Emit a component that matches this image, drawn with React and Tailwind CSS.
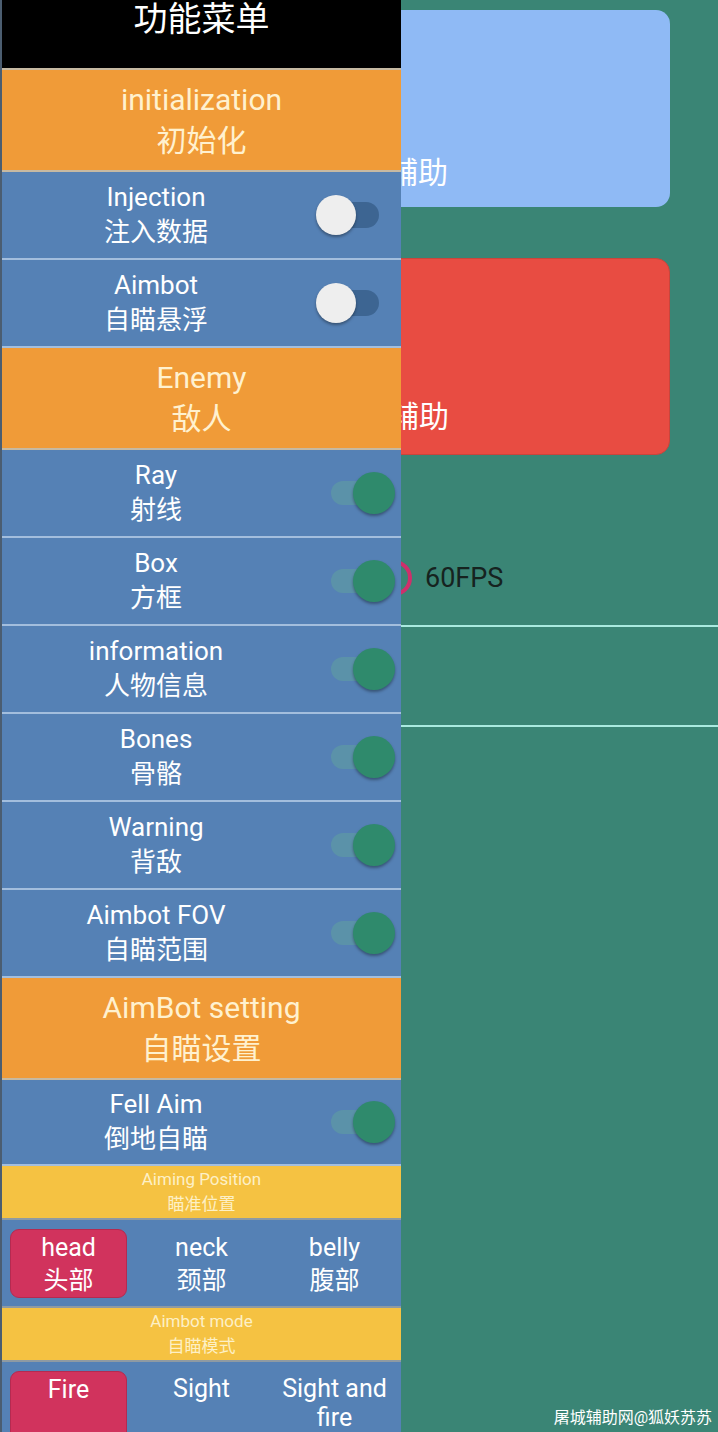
import React from "react";

const menu = [
  { kind: "group", en: "initialization", zh: "初始化" },
  { kind: "switch", en: "Injection", zh: "注入数据", on: false },
  { kind: "switch", en: "Aimbot", zh: "自瞄悬浮", on: false },
  { kind: "group", en: "Enemy", zh: "敌人" },
  { kind: "switch", en: "Ray", zh: "射线", on: true },
  { kind: "switch", en: "Box", zh: "方框", on: true },
  { kind: "switch", en: "information", zh: "人物信息", on: true },
  { kind: "switch", en: "Bones", zh: "骨骼", on: true },
  { kind: "switch", en: "Warning", zh: "背敌", on: true },
  { kind: "switch", en: "Aimbot FOV", zh: "自瞄范围", on: true },
  { kind: "group", en: "AimBot setting", zh: "自瞄设置" },
  { kind: "switch", en: "Fell Aim", zh: "倒地自瞄", on: true, short: true },
  { kind: "label", en: "Aiming Position", zh: "瞄准位置" },
  {
    kind: "choice",
    items: [
      { en: "head", zh: "头部", active: true },
      { en: "neck", zh: "颈部" },
      { en: "belly", zh: "腹部" },
    ],
  },
  { kind: "label", en: "Aimbot mode", zh: "自瞄模式" },
  {
    kind: "choice",
    last: true,
    items: [
      { en: "Fire", active: true },
      { en: "Sight" },
      { en: "Sight and fire" },
    ],
  },
];

function Toggle({ on }) {
  if (on) {
    return (
      <div className="relative w-[82px] h-[46px] shrink-0">
        <div className="absolute left-[16px] top-[11px] w-[46px] h-[24px] rounded-full bg-[#5b92a9]" />
        <div className="absolute left-[38px] top-[2px] w-[42px] h-[42px] rounded-full bg-[#2f8a6c] shadow-[0_2px_3px_rgba(0,0,0,0.35)]" />
      </div>
    );
  }
  return (
    <div className="relative w-[82px] h-[46px] shrink-0">
      <div className="absolute left-[6px] top-[10px] w-[58px] h-[26px] rounded-full bg-[#3d6592]" />
      <div className="absolute left-[1px] top-[3px] w-[40px] h-[40px] rounded-full bg-[#eeeeee] shadow-[0_2px_3px_rgba(0,0,0,0.35)]" />
    </div>
  );
}

function MenuRow({ row }) {
  if (row.kind === "group") {
    return (
      <div className="h-[102px] shrink-0 bg-[#f09b38] border-b-2 border-[#c6b9a2] flex flex-col items-center justify-center text-[30px] leading-[41px] text-[#fff1cf]">
        <div>{row.en}</div>
        <div>{row.zh}</div>
      </div>
    );
  }
  if (row.kind === "switch") {
    return (
      <div
        className={
          "shrink-0 bg-[#5581b5] border-b-2 border-[#a3bedd] flex items-center " +
          (row.short ? "h-[86px]" : "h-[88px]")
        }
      >
        <div className="flex-1 pr-[5px] flex flex-col items-center text-[26px] leading-[35px] text-white">
          <div>{row.en}</div>
          <div>{row.zh}</div>
        </div>
        <div className="mr-[4px]">
          <Toggle on={row.on} />
        </div>
      </div>
    );
  }
  if (row.kind === "label") {
    return (
      <div className="h-[54px] shrink-0 bg-[#f5c242] border-b-2 border-[#8e9aa3] flex flex-col items-center justify-center text-[17px] leading-[25px] text-[#fdf0c6]">
        <div>{row.en}</div>
        <div>{row.zh}</div>
      </div>
    );
  }
  return (
    <div
      className={
        "bg-[#5581b5] grid grid-cols-3 " +
        (row.last ? "flex-1 pt-[9px]" : "h-[88px] shrink-0 border-b-2 border-[#8e9aa3] py-[9px]")
      }
    >
      {row.items.map((it) => (
        <div
          key={it.en}
          className={
            "mx-[8px] flex flex-col items-center text-[25px] leading-[33px] text-white text-center " +
            (it.active ? "bg-[#d1335d] rounded-[9px] border border-[#b52a50]" : "") +
            (row.last ? " h-[80px] pt-[3px]" : " h-[69px] justify-center")
          }
        >
          <div className={row.last ? "leading-[29px]" : ""}>{it.en}</div>
          {it.zh && <div>{it.zh}</div>}
        </div>
      ))}
    </div>
  );
}

export default function App() {
  return (
    <div className="relative w-[718px] h-[1432px] overflow-hidden bg-[#3a8575] font-[Roboto,'Noto_Sans_CJK_SC',sans-serif]">
      {/* page behind the drawer */}
      <div className="pt-[10px]">
        <div className="ml-[12px] mr-[48px] h-[197px] rounded-[14px] bg-[#8fbaf5] flex items-end pl-[316px] pb-[14px] text-[30px] leading-[40px] text-white">
          开启辅助
        </div>
        <div className="mt-[51px] ml-[12px] mr-[48px] h-[197px] rounded-[14px] bg-[#e84c42] border border-[#c9453c] flex items-end pl-[316px] pb-[17px] text-[30px] leading-[40px] text-white">
          关闭辅助
        </div>
        <div className="mt-[72px] h-[100px] border-b-2 border-[#a9eadf] flex items-center pl-[376px] pt-[4px]">
          <div className="w-[36px] h-[36px] rounded-full border-[4px] border-[#cf2f6b]" />
          <span className="ml-[13px] text-[27px] text-[#16231f]">60FPS</span>
        </div>
        <div className="h-[100px] border-b-2 border-[#a9eadf]" />
      </div>

      <div className="absolute right-[6px] bottom-[4px] text-[16px] leading-[20px] text-white">
        屠城辅助网@狐妖苏苏
      </div>

      {/* slide-out menu */}
      <div className="absolute left-0 top-0 bottom-0 w-[401px] border-l-2 border-[#4b5d70] flex flex-col">
        <div className="h-[70px] shrink-0 bg-black border-b-2 border-[#c6b9a2] flex justify-center text-[34px] leading-[38px] text-white">
          功能菜单
        </div>
        {menu.map((row, i) => (
          <MenuRow key={i} row={row} />
        ))}
      </div>
    </div>
  );
}
